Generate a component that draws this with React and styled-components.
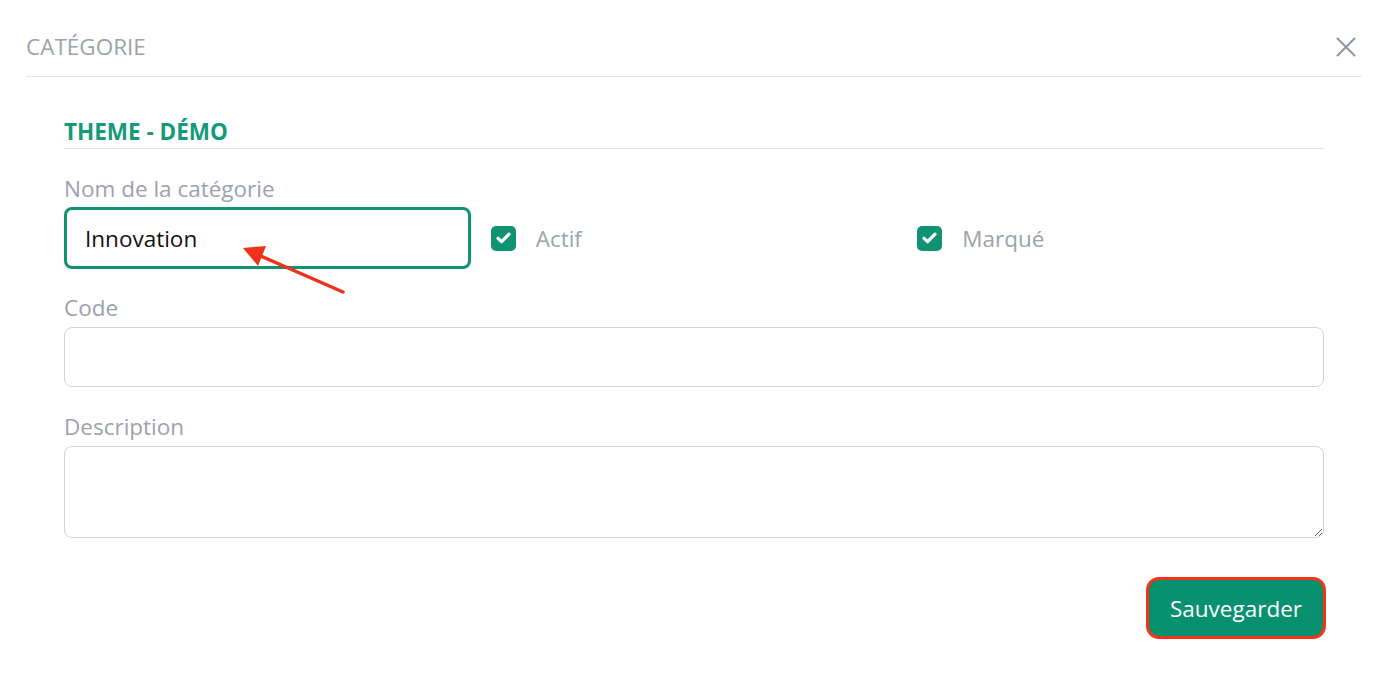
import React from 'react';
import styled, { createGlobalStyle } from 'styled-components';

const green = '#0f9373';
const gray = '#9ca1ae';

const Global = createGlobalStyle`
  body {
    margin: 0;
    background: #fff;
    font-family: 'Open Sans', 'Liberation Sans', sans-serif;
  }
  * { box-sizing: border-box; }
`;

const Modal = styled.div`
  position: relative;
  width: 1384px;
  height: 692px;
  padding: 0 22px 0 26px;
`;

const Header = styled.div`
  display: flex;
  align-items: center;
  justify-content: space-between;
  padding: 32px 6px 14px 0;
  border-bottom: 1px solid #e1e3e8;
`;

const Title = styled.h2`
  margin: 0;
  font-size: 22.5px;
  line-height: 30px;
  font-weight: 400;
  color: ${gray};
`;

const Close = styled.button`
  display: flex;
  padding: 0;
  border: 0;
  background: none;
  cursor: pointer;
`;

const Body = styled.div`
  padding: 40px 38px 0 38px;
`;

const Section = styled.h3`
  margin: 0;
  padding-bottom: 1px;
  font-size: 22.5px;
  line-height: 30px;
  font-weight: 700;
  color: #149a77;
  border-bottom: 1px solid #e1e3e8;
`;

const Grid = styled.div`
  display: grid;
  grid-template-columns: repeat(3, 1fr);
  column-gap: 20px;
  margin-top: 25px;
  align-items: end;
`;

const Field = styled.div`
  display: flex;
  flex-direction: column;
  margin-top: ${(p) => p.$top || 0}px;
`;

const Label = styled.label`
  font-size: 22.5px;
  line-height: 30px;
  color: ${gray};
  margin-bottom: ${(p) => p.$gap || 4}px;
`;

const Input = styled.input`
  height: ${(p) => (p.$focus ? 62 : 60)}px;
  width: 100%;
  padding: 0 18px;
  font-family: inherit;
  font-size: 22.5px;
  color: #111;
  border: ${(p) => (p.$focus ? `3px solid ${green}` : '1.5px solid #d0d3d8')};
  border-radius: 8px;
  outline: none;
`;

const Area = styled.textarea`
  height: 92px;
  width: 100%;
  padding: 12px 18px;
  font-family: inherit;
  font-size: 22.5px;
  border: 1.5px solid #d0d3d8;
  border-radius: 8px;
  outline: none;
  display: block;
`;

const Check = styled.label`
  display: flex;
  align-items: center;
  gap: 20px;
  height: 62px;
  font-size: 22.5px;
  color: ${gray};
`;

const Box = styled.span`
  width: 25px;
  height: 25px;
  border-radius: 5px;
  background: ${green};
  display: flex;
  align-items: center;
  justify-content: center;
`;

const Footer = styled.div`
  display: flex;
  justify-content: flex-end;
  margin-top: 39px;
  margin-right: -2px;
`;

const SaveButton = styled.button`
  height: 62px;
  padding: 0 21px;
  font-family: inherit;
  font-size: 22.5px;
  color: #fff;
  background: #08906f;
  border: 3px solid #f2341c;
  border-radius: 13px;
  cursor: pointer;
`;

const Arrow = styled.svg`
  position: absolute;
  left: 230px;
  top: 236px;
  pointer-events: none;
`;

const CheckBox = ({ label }) => (
  <Check>
    <Box>
      <svg width="15" height="12" viewBox="0 0 15 12">
        <path d="M2 6.3l3.6 3.4L13 2.2" fill="none" stroke="#fff" strokeWidth="3.2" strokeLinecap="round" strokeLinejoin="round" />
      </svg>
    </Box>
    {label}
  </Check>
);

export default function App() {
  return (
    <Modal>
      <Global />
      <Header>
        <Title>CATÉGORIE</Title>
        <Close aria-label="Fermer">
          <svg width="20" height="20" viewBox="0 0 20 20">
            <path d="M1.5 1.5l17 17M18.5 1.5l-17 17" stroke="#8f95a3" strokeWidth="2" strokeLinecap="round" />
          </svg>
        </Close>
      </Header>
      <Body>
        <Section>THEME - DÉMO</Section>
        <Grid>
          <Field>
            <Label $gap={3}>Nom de la catégorie</Label>
            <Input $focus defaultValue="Innovation" />
          </Field>
          <CheckBox label="Actif" />
          <CheckBox label="Marqué" />
        </Grid>
        <Field $top={24}>
          <Label>Code</Label>
          <Input />
        </Field>
        <Field $top={25}>
          <Label>Description</Label>
          <Area />
        </Field>
        <Footer>
          <SaveButton>Sauvegarder</SaveButton>
        </Footer>
      </Body>
      <Arrow width="120" height="64" viewBox="0 0 120 64">
        <line x1="113" y1="56" x2="26" y2="18" stroke="#f0321c" strokeWidth="3.5" strokeLinecap="round" />
        <polygon points="13,12 36,10 28,30" fill="#f0321c" />
      </Arrow>
    </Modal>
  );
}
